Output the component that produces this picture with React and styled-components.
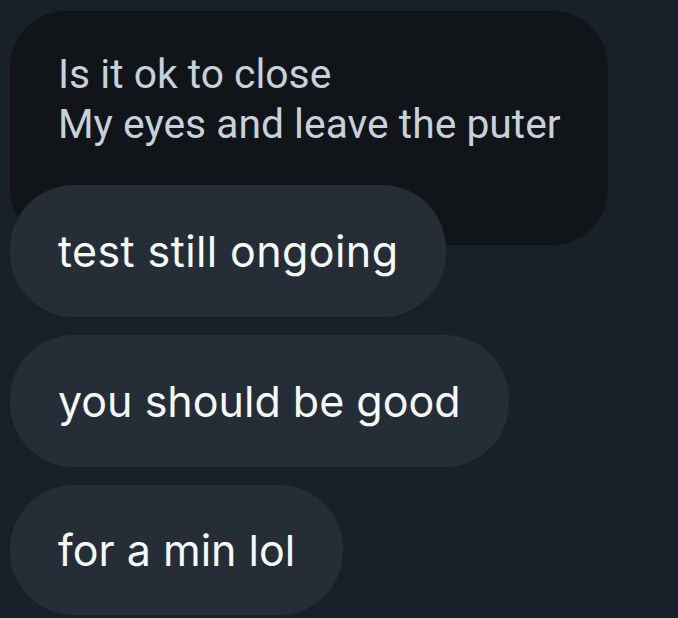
import React from 'react';
import styled, { createGlobalStyle } from 'styled-components';

const GlobalStyle = createGlobalStyle`
  html, body {
    margin: 0;
    padding: 0;
    background: #18202a;
  }
  #root {
    min-height: 618px;
  }
`;

const Thread = styled.div`
  display: flex;
  flex-direction: column;
  align-items: flex-start;
  gap: 18px;
  padding: 11px 0 0 10px;
  height: 618px;
  box-sizing: border-box;
  overflow: hidden;
`;

const Quote = styled.div`
  background: #111519;
  border-radius: 56px;
  padding: 38px 47px 96px 48px;
  margin-bottom: -78px;
  color: #c7d1d9;
  font-family: Roboto, "Liberation Sans", sans-serif;
  font-size: 40.8px;
  line-height: 50px;
`;

const Line = styled.div`
  white-space: nowrap;
`;

const Bubble = styled.div`
  position: relative;
  display: flex;
  align-items: center;
  height: ${(p) => p.$h || 132}px;
  padding: 0 48px;
  box-sizing: border-box;
  background: #252e37;
  border-radius: 64px;
  color: #f7f9f9;
  font-family: Inter, "Noto Sans", sans-serif;
  font-size: 43px;
  letter-spacing: ${(p) => p.$ls || 0}px;
  white-space: nowrap;
`;

export default function App() {
  return (
    <>
      <GlobalStyle />
      <Thread>
        <Quote>
          <Line>Is it ok to close</Line>
          <Line>My eyes and leave the puter</Line>
        </Quote>
        <Bubble $ls={0.4}>test still ongoing</Bubble>
        <Bubble>you should be good</Bubble>
        <Bubble $h={130}>for a min lol</Bubble>
      </Thread>
    </>
  );
}
